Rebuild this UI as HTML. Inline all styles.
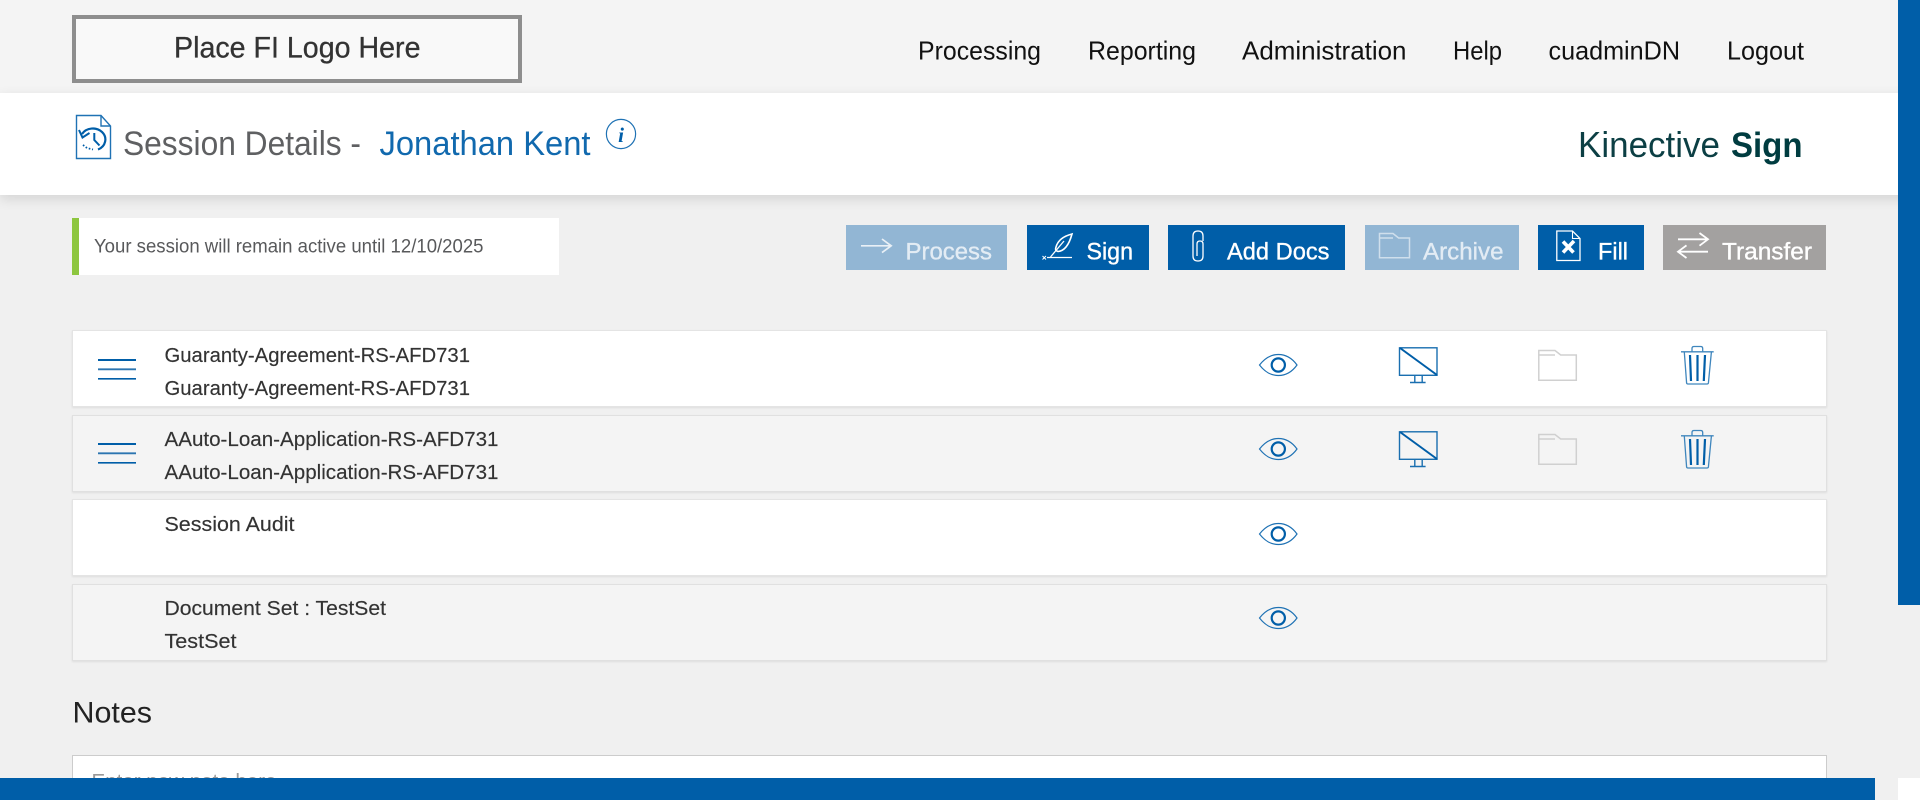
<!DOCTYPE html>
<html lang="en">
<head>
<meta charset="utf-8">
<title>Session Details</title>
<style>
html,body{margin:0;padding:0;width:1920px;height:800px;overflow:hidden;background:#f0f0f0;}
body{position:relative;font-family:"Liberation Sans",sans-serif;}
.a{position:absolute;box-sizing:border-box;}
svg{position:absolute;left:0;top:0;}
text{font-family:"Liberation Sans",sans-serif;}
</style>
</head>
<body>
<div class="a" style="left:0;top:0;width:1920px;height:93px;background:#f4f4f4"></div>
<div class="a" style="left:0;top:93px;width:1920px;height:102px;background:#fff;box-shadow:0 4px 12px rgba(0,0,0,.12)"></div>
<div class="a" style="left:72px;top:15px;width:450px;height:68px;background:#f9f9f9;border:4px solid #8e8e8e"></div>
<div class="a" style="left:72px;top:218px;width:487px;height:57px;background:#fff;border-left:7px solid #8dc63f"></div>

<div class="a" style="left:846px;top:225px;width:161px;height:45px;background:#92b6d4"></div>
<div class="a" style="left:1027px;top:225px;width:122px;height:45px;background:#005ea8"></div>
<div class="a" style="left:1168px;top:225px;width:177px;height:45px;background:#005ea8"></div>
<div class="a" style="left:1365px;top:225px;width:154px;height:45px;background:#92b6d4"></div>
<div class="a" style="left:1538px;top:225px;width:106px;height:45px;background:#005ea8"></div>
<div class="a" style="left:1663px;top:225px;width:163px;height:45px;background:#a3a1a0"></div>

<div class="a" style="left:72px;top:330px;width:1755px;height:77px;background:#fff;border:1px solid #e4e4e4;box-shadow:0 1px 2px rgba(0,0,0,.08)"></div>
<div class="a" style="left:72px;top:415px;width:1755px;height:77px;background:#f4f4f4;border:1px solid #e0e0e0;box-shadow:0 1px 2px rgba(0,0,0,.08)"></div>
<div class="a" style="left:72px;top:499px;width:1755px;height:77px;background:#fff;border:1px solid #e4e4e4;box-shadow:0 1px 2px rgba(0,0,0,.08)"></div>
<div class="a" style="left:72px;top:584px;width:1755px;height:77px;background:#f4f4f4;border:1px solid #e0e0e0;box-shadow:0 1px 2px rgba(0,0,0,.08)"></div>

<div class="a" style="left:72px;top:755px;width:1755px;height:60px;background:#fff;border:1px solid #ccc"></div>

<svg width="1920" height="800" viewBox="0 0 1920 800" xmlns="http://www.w3.org/2000/svg">
<defs>
<g id="eye" fill="none" stroke="#1f72b4">
<path d="M1259.5 365C1265 358 1271 354.5 1278.3 354.5S1292 358 1297 365C1292 372 1286 375.5 1278.3 375.5S1265 372 1259.5 365Z" stroke-width="1.2"/>
<circle cx="1278.3" cy="365" r="6.6" stroke="#005ea8" stroke-width="2.2"/>
</g>
<g id="mon" fill="none" stroke="#1a6fb0" stroke-width="1.4">
<rect x="1399.5" y="347.8" width="37.5" height="27.5"/>
<path d="M1400 348L1437 375" stroke="#005ea8" stroke-width="2"/>
<path d="M1414.8 375.5V382M1422.2 375.5V382M1410 382.5H1425.6"/>
</g>
<g id="fold" fill="none" stroke="#d0d0d0" stroke-width="1.5">
<path d="M1538.8 380.3V350.5H1555L1560.7 355H1576.3V380.3Z"/>
<path d="M1538.8 355H1555"/>
</g>
<g id="trash" fill="none" stroke="#3f86bd" stroke-width="1.3">
<path d="M1681 351.8H1713.7"/>
<path d="M1692 351.5V348.5Q1692 346.5 1694 346.5H1700.7Q1702.7 346.5 1702.7 348.5V351.5"/>
<path d="M1684.3 352L1686.6 383Q1686.8 384 1688 384H1707Q1708.2 384 1708.4 383L1711.4 352"/>
<path d="M1690 355L1691 381M1697.5 355V381M1705 355L1703.8 381" stroke="#005ea8" stroke-width="2.2"/>
</g>
<g id="ham" stroke="#005ea8" fill="none">
<path d="M98 360H136" stroke-width="2"/>
<path d="M98 369.3H136" stroke="#2b75b0" stroke-width="1.8"/>
<path d="M98 378.8H136" stroke-width="1.6"/>
</g>
</defs>

<!-- logo -->
<text x="174" y="57.5" font-size="30" fill="#333" stroke="#333" stroke-width=".3" textLength="246.5" lengthAdjust="spacingAndGlyphs">Place FI Logo Here</text>

<!-- nav -->
<g font-size="26" fill="#111">
<text x="918" y="59.5" textLength="123" lengthAdjust="spacingAndGlyphs">Processing</text>
<text x="1088" y="59.5" textLength="108" lengthAdjust="spacingAndGlyphs">Reporting</text>
<text x="1242" y="59.5" textLength="164.5" lengthAdjust="spacingAndGlyphs">Administration</text>
<text x="1453" y="59.5" textLength="49" lengthAdjust="spacingAndGlyphs">Help</text>
<text x="1548.5" y="59.5" textLength="131.5" lengthAdjust="spacingAndGlyphs">cuadminDN</text>
<text x="1727" y="59.5" textLength="77" lengthAdjust="spacingAndGlyphs">Logout</text>
</g>

<!-- title -->
<g fill="none" stroke="#1f72b4" stroke-width="1.4">
<path d="M76.5 115.5H101L110.5 126V158.5H76.5Z"/>
<path d="M101 115.5V126H110.5"/>
<path d="M82 134A12.5 11 0 1 1 98 149.5" stroke="#005ea8" stroke-width="2.2"/>
<path d="M79 130L82.5 137.5L89.5 133" stroke="#005ea8" stroke-width="2"/>
<path d="M94.3 133V140L99.5 145.5" stroke="#005ea8" stroke-width="2"/>
<path d="M83 145L87 148L93 149.5" stroke="#005ea8" stroke-width="1.8" stroke-dasharray="1.6 1.8"/>
</g>
<text x="123" y="155" font-size="34.5" fill="#5f6062" textLength="238" lengthAdjust="spacingAndGlyphs">Session Details -</text>
<text x="379.5" y="155" font-size="34.5" fill="#1169ae" textLength="211" lengthAdjust="spacingAndGlyphs">Jonathan Kent</text>
<circle cx="621" cy="134" r="14.6" fill="none" stroke="#1f72b4" stroke-width="1.2"/>
<text x="621" y="142" font-size="21" font-weight="bold" font-style="italic" fill="#005ea8" text-anchor="middle" style="font-family:'Liberation Serif',serif">i</text>

<text x="1578" y="157" font-size="36" fill="#0c3f44" textLength="142" lengthAdjust="spacingAndGlyphs">Kinective</text>
<text x="1731" y="157" font-size="35" font-weight="bold" fill="#003c40" textLength="71.5" lengthAdjust="spacingAndGlyphs">Sign</text>

<!-- message -->
<text x="94" y="252.5" font-size="19" fill="#58595b" textLength="389.5" lengthAdjust="spacingAndGlyphs">Your session will remain active until 12/10/2025</text>

<!-- button labels -->
<g font-size="24.5" fill="#fff" stroke="#fff" stroke-width=".35">
<text x="905.5" y="259.5" fill="#e3ecf4" stroke="#e3ecf4" textLength="86.5" lengthAdjust="spacingAndGlyphs">Process</text>
<text x="1086.5" y="259.5" textLength="46.5" lengthAdjust="spacingAndGlyphs">Sign</text>
<text x="1227" y="259.5" textLength="102.5" lengthAdjust="spacingAndGlyphs">Add Docs</text>
<text x="1423" y="259.5" fill="#e3ecf4" stroke="#e3ecf4" textLength="80.5" lengthAdjust="spacingAndGlyphs">Archive</text>
<text x="1598" y="259.5" textLength="30" lengthAdjust="spacingAndGlyphs">Fill</text>
<text x="1722" y="259.5" textLength="90" lengthAdjust="spacingAndGlyphs">Transfer</text>
</g>

<!-- button icons -->
<path d="M861 245.8H891M882 239L891.2 245.8L882 252.6" fill="none" stroke="#e9f0f6" stroke-width="1.7"/>
<g fill="none" stroke="#fff">
<path d="M1047 257.5H1072" stroke-width="1.2"/>
<path d="M1042.5 256L1046 259.5M1046 256L1042.5 259.5" stroke-width="1"/>
<path d="M1072 234C1064 236 1058 240 1056 247C1055 250 1056 251 1058 251.5C1064 251 1069 245 1072 234Z" stroke-width="1.6"/>
<path d="M1050.5 257L1064 241" stroke-width="1.3"/>
</g>
<path d="M1203 241V236Q1203 231 1198 231T1193 236V256Q1193 261 1198 261T1203 256V244Q1203 241 1200 241T1197 244V256" fill="none" stroke="#fff" stroke-width="1.3"/>
<path d="M1379.5 257.8V233.5H1393L1398.6 238H1409.5V257.8ZM1379.5 238H1393" fill="none" stroke="#cfdfec" stroke-width="1.5"/>
<g fill="none" stroke="#fff">
<path d="M1556.8 231H1572.5L1580 238.5V260.5H1556.8Z" stroke-width="1.3"/>
<path d="M1572.5 231V238.5H1580" stroke-width="1.1"/>
<path d="M1563 241.5L1573.5 252.5M1574 241L1563 252.5" stroke-width="3.6"/>
</g>
<g fill="none" stroke="#fff" stroke-width="1.8">
<path d="M1678 239.3H1708M1699.5 233L1708 239.3L1699.5 245.7"/>
<path d="M1708 251.7H1678M1686.5 245.4L1678 251.7L1686.5 258"/>
</g>

<!-- rows -->
<use href="#ham"/>
<use href="#ham" y="84"/>
<use href="#eye"/>
<use href="#eye" y="84"/>
<use href="#eye" y="169"/>
<use href="#eye" y="253"/>
<use href="#mon"/>
<use href="#mon" y="84"/>
<use href="#fold"/>
<use href="#fold" y="84"/>
<use href="#trash"/>
<use href="#trash" y="84"/>

<g font-size="20.5" fill="#333" stroke="#333" stroke-width=".15">
<text x="164.5" y="362" textLength="305.5" lengthAdjust="spacingAndGlyphs">Guaranty-Agreement-RS-AFD731</text>
<text x="164.5" y="395" textLength="305.5" lengthAdjust="spacingAndGlyphs">Guaranty-Agreement-RS-AFD731</text>
<text x="164.5" y="446" textLength="334" lengthAdjust="spacingAndGlyphs">AAuto-Loan-Application-RS-AFD731</text>
<text x="164.5" y="479" textLength="334" lengthAdjust="spacingAndGlyphs">AAuto-Loan-Application-RS-AFD731</text>
<text x="164.5" y="531" textLength="130" lengthAdjust="spacingAndGlyphs">Session Audit</text>
<text x="164.5" y="615" textLength="221.5" lengthAdjust="spacingAndGlyphs">Document Set : TestSet</text>
<text x="164.5" y="648" textLength="72" lengthAdjust="spacingAndGlyphs">TestSet</text>
</g>

<text x="72.5" y="722.5" font-size="30" fill="#222" textLength="79.5" lengthAdjust="spacingAndGlyphs">Notes</text>
<text x="91.5" y="788" font-size="20" fill="#999" textLength="185" lengthAdjust="spacingAndGlyphs">Enter new note here</text>
</svg>

<div class="a" style="left:1898px;top:0;width:22px;height:605px;background:#005ea8"></div>
<div class="a" style="left:0;top:778px;width:1875px;height:22px;background:#005ea8"></div>
<div class="a" style="left:1875px;top:778px;width:23px;height:22px;background:#f0f0f0"></div>
<div class="a" style="left:1898px;top:778px;width:22px;height:22px;background:#fff"></div>
</body>
</html>
